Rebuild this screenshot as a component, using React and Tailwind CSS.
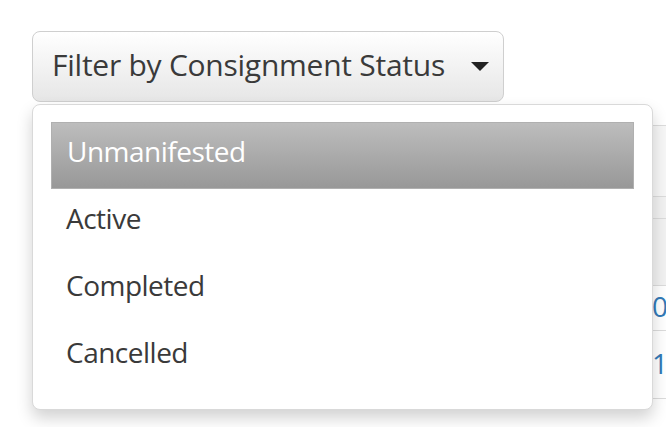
import React from 'react';

const statuses = ['Unmanifested', 'Active', 'Completed', 'Cancelled'];

const rows = [
    { h: 'h-[71px]', bg: 'bg-[#f7f7f7]', text: '' },
    { h: 'h-[22px]', bg: 'bg-[#f2f2f2]', text: '' },
    { h: 'h-[67px]', bg: 'bg-[#f2f2f2]', text: '' },
    { h: 'h-[45px]', bg: 'bg-white', text: '0' },
    { h: 'h-[68px]', bg: 'bg-white', text: '1' },
];

const App = () => {
    return (
        <div className="relative h-[427px] w-[666px] overflow-hidden bg-white font-['Open_Sans',sans-serif] text-[28px] text-[#333]">
            <div className="pl-[32px] pt-[31px]">
                <button className="flex h-[71px] w-[472px] items-center rounded-[8px] border border-[#cfcfcf] bg-gradient-to-b from-white to-[#e6e6e6] pb-[4px] pl-[19px] text-left text-[30px] leading-none tracking-[-0.25px] text-[#3a3a3a]">
                    <span>Filter by Consignment Status</span>
                    <svg className="ml-[26px] mt-[4px]" width="18" height="9" viewBox="0 0 18 9">
                        <path d="M0 0 L18 0 L9 9 Z" fill="#222" />
                    </svg>
                </button>

                {/* table behind the menu */}
                <div className="mt-[23px] w-[700px] border-t border-[#dcdcdc]">
                    {rows.map((row, i) => (
                        <div key={i} className={`flex items-center border-b border-[#dcdcdc] ${row.h} ${row.bg}`}>
                            <span className="ml-[620px] pb-[4px] text-[#337ab7]">{row.text}</span>
                        </div>
                    ))}
                </div>
            </div>

            <div className="absolute left-[32px] top-[104px] h-[306px] w-[621px] rounded-[8px] border border-[#d9d9d9] bg-white px-[18px] pt-[17px] shadow-[0_8px_16px_rgba(0,0,0,0.18)]">
                {statuses.map((s, i) => (
                    <div
                        key={s}
                        className={`flex h-[67px] items-center pb-[9px] pl-[15px] tracking-[-0.5px] ${i === 0 ? 'border border-[#b0b0b0] bg-gradient-to-b from-[#bdbdbd] to-[#989898] text-white' : 'text-[#3a3a3a]'}`}
                    >
                        {s}
                    </div>
                ))}
            </div>
        </div>
    );
};

export default App;
